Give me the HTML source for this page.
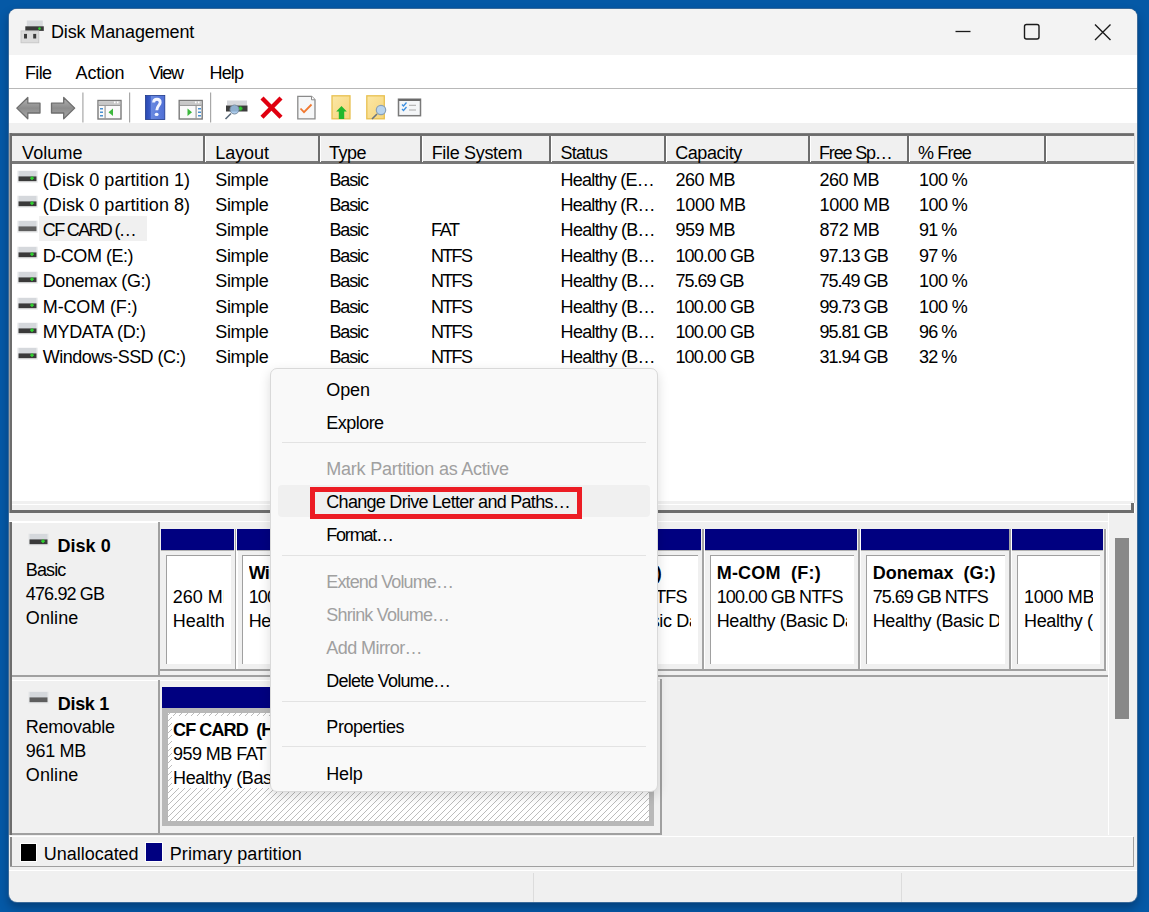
<!DOCTYPE html>
<html><head><meta charset="utf-8"><style>
html,body{margin:0;padding:0;}
body{width:1149px;height:912px;overflow:hidden;position:relative;background:#0559a6;font-family:"Liberation Sans", sans-serif;color:#000;}
div{position:absolute;}
.t{white-space:pre;line-height:20px;}
</style></head><body>
<div style="left:8px;top:8px;width:1130px;height:895px;border-radius:9px;background:#3a6a9a;box-shadow:0 5px 9px rgba(0,20,50,0.35);"></div><div style="left:9px;top:9px;width:1128px;height:893px;border-radius:8px;background:#f0f0f0;overflow:hidden;"><div style="left:0;top:0;width:1128px;height:46px;background:#f3f3f3;"></div></div><div style="left:9px;top:55px;width:1128px;height:33px;background:#fff;"></div><div style="left:9px;top:88px;width:1128px;height:1.3px;background:#b8b8b8;"></div><div style="left:9px;top:89px;width:1128px;height:34px;background:#fff;"></div><div class="t" style="left:51px;top:22.36px;font-size:18px;color:#000;letter-spacing:-0.126px;">Disk Management</div><div class="t" style="left:25px;top:63.36px;font-size:18px;letter-spacing:-0.664px;">File</div><div class="t" style="left:75.6px;top:63.36px;font-size:18px;letter-spacing:-0.203px;">Action</div><div class="t" style="left:149px;top:63.36px;font-size:18px;letter-spacing:-1.230px;">View</div><div class="t" style="left:209.6px;top:63.36px;font-size:18px;letter-spacing:-0.870px;">Help</div><svg style="position:absolute;left:950px;top:20px" width="170" height="24" viewBox="0 0 170 24"><path d="M5.5 11.5h15" stroke="#1a1a1a" stroke-width="1.3"/><rect x="74.5" y="4.5" width="14.5" height="14.5" rx="2" fill="none" stroke="#1a1a1a" stroke-width="1.4"/><path d="M145 4.5l15.5 15.5M160.5 4.5L145 20" stroke="#1a1a1a" stroke-width="1.4"/></svg><svg style="position:absolute;left:0;top:0" width="440" height="126" viewBox="0 0 440 126"><defs><linearGradient id="ag" x1="0" y1="0" x2="0" y2="1"><stop offset="0" stop-color="#b4b4b4"/><stop offset="0.5" stop-color="#8c8c8c"/><stop offset="1" stop-color="#a8a8a8"/></linearGradient><linearGradient id="yf" x1="0" y1="0" x2="1" y2="1"><stop offset="0" stop-color="#fbe7a6"/><stop offset="1" stop-color="#f6d57a"/></linearGradient><linearGradient id="hb" x1="0" y1="0" x2="1" y2="0"><stop offset="0" stop-color="#2a48b0"/><stop offset="0.25" stop-color="#3a5cc8"/><stop offset="0.3" stop-color="#6a8ae0"/><stop offset="1" stop-color="#4f6fd6"/></linearGradient></defs><path d="M16.8 108.1L27.8 97.5V103.2H40V113H27.8V118.8Z" fill="url(#ag)" stroke="#6e6e6e" stroke-width="1.3" stroke-linejoin="round"/><path d="M74.7 108.1L63.7 97.5V103.2H51.5V113H63.7V118.8Z" fill="url(#ag)" stroke="#6e6e6e" stroke-width="1.3" stroke-linejoin="round"/><rect x="82.3" y="92.5" width="1.2" height="30" fill="#a8a8a8"/><rect x="129" y="92.5" width="1.2" height="30" fill="#a8a8a8"/><rect x="210" y="92.5" width="1.2" height="30" fill="#a8a8a8"/><rect x="98" y="100.5" width="23" height="18.5" fill="#fafafa" stroke="#7a7a7a" stroke-width="1.4"/><rect x="98.7" y="101.2" width="21.6" height="3" fill="#c8c8c8"/><rect x="98.7" y="104.5" width="21.6" height="1.5" fill="#9a9a9a"/><rect x="114" y="101.5" width="1.5" height="1.8" fill="#fff"/><rect x="117" y="101.5" width="1.5" height="1.8" fill="#fff"/><rect x="104.5" y="106" width="1.2" height="13" fill="#9a9a9a"/><rect x="100" y="108" width="3" height="1.5" fill="#4a90d0"/><rect x="100" y="111.5" width="3" height="1.5" fill="#4a90d0"/><rect x="100" y="115" width="3" height="1.5" fill="#4a90d0"/><path d="M113 108.5L108.5 112.2L113 116Z" fill="#3cb83c"/><rect x="145.5" y="95.5" width="19.3" height="24" fill="url(#hb)"/><rect x="145.5" y="95.5" width="19.3" height="24" fill="none" stroke="#1e3a8a" stroke-width="0.8"/><path d="M153.6 102.6C153.6 100.2 155.2 99.3 157 99.3C159 99.3 160.2 100.6 160.2 102.4C160.2 105.2 156.8 105.8 156.8 110.3" fill="none" stroke="#f4f6ff" stroke-width="2.9"/><ellipse cx="156.6" cy="114.4" rx="2" ry="1.6" fill="#f4f6ff"/><rect x="179.2" y="100.5" width="23" height="18.5" fill="#fafafa" stroke="#7a7a7a" stroke-width="1.4"/><rect x="179.9" y="101.2" width="21.6" height="3" fill="#c8c8c8"/><rect x="179.9" y="104.5" width="21.6" height="1.5" fill="#9a9a9a"/><rect x="195" y="101.5" width="1.5" height="1.8" fill="#fff"/><rect x="198" y="101.5" width="1.5" height="1.8" fill="#fff"/><rect x="195.5" y="106" width="1.2" height="13" fill="#9a9a9a"/><rect x="198" y="108" width="3" height="1.5" fill="#4a90d0"/><rect x="198" y="111.5" width="3" height="1.5" fill="#4a90d0"/><rect x="198" y="115" width="3" height="1.5" fill="#4a90d0"/><path d="M187.5 108.5L192 112.2L187.5 116Z" fill="#3cb83c"/><rect x="227" y="100.5" width="20" height="5" fill="#d6d8dc"/><rect x="226" y="105.5" width="21.5" height="6" fill="#3c3c3c"/><rect x="238.5" y="107.5" width="4" height="2" fill="#2ccc2c"/><rect x="239.5" y="106.5" width="2" height="4" fill="#2ccc2c"/><line x1="225.5" y1="119" x2="231" y2="113.5" stroke="#5a6a7a" stroke-width="1.6"/><circle cx="234.5" cy="109.5" r="4.5" fill="#9cc2e8" fill-opacity="0.85" stroke="#7a8ea2" stroke-width="1"/><path d="M263.5 99.5L279.5 115.8M279.5 99.5L263.5 115.8" stroke="#e00010" stroke-width="4.3" stroke-linecap="square"/><path d="M297.8 96.3H311.5L315 99.8V118.8H297.8Z" fill="#f6f7f8" stroke="#8a8a8a" stroke-width="1.3"/><path d="M311.5 96.3V99.8H315" fill="#fff" stroke="#8a8a8a" stroke-width="1"/><path d="M300.5 108.5L304 112.2L311.5 104.5" fill="none" stroke="#f07830" stroke-width="1.8"/><rect x="332" y="95.8" width="18" height="23" fill="url(#yf)" stroke="#e8c050" stroke-width="1.3"/><path d="M341.5 106L346.8 111.6H344.2V119H338.8V111.6H336.2Z" fill="#22b82c"/><rect x="366.8" y="95.8" width="17.5" height="23" fill="url(#yf)" stroke="#e8c050" stroke-width="1.3"/><line x1="372" y1="119" x2="377" y2="114" stroke="#6a7480" stroke-width="1.6"/><circle cx="381" cy="110" r="4.7" fill="#b8d4ee" stroke="#8aa0b6" stroke-width="1.2"/><rect x="398.5" y="99.2" width="22" height="16.5" fill="#f4f6f8" stroke="#7a7a7a" stroke-width="1.5"/><rect x="398.5" y="99" width="22" height="2" fill="#6a6a6a"/><path d="M402 104.5L403.5 106L406.5 102.5M402 109L403.5 110.5L406.5 107" fill="none" stroke="#3a8ee0" stroke-width="1.3"/><rect x="409" y="104.8" width="7" height="1" fill="#a8a8a8"/><rect x="409" y="109.5" width="7" height="1" fill="#a8a8a8"/><rect x="26.8" y="20.5" width="16" height="6" fill="#d8dadd"/><rect x="25.3" y="26.3" width="18.5" height="4.6" fill="#3a3a3a"/><circle cx="39.5" cy="28.6" r="1.3" fill="#30d030"/><rect x="21" y="30.9" width="17.8" height="11.9" fill="#dcdcdc" stroke="#c4c4c4" stroke-width="0.8"/><rect x="24" y="33.9" width="3" height="4.6" fill="#3c3c3c"/><rect x="33.2" y="33.9" width="3" height="4.6" fill="#3c3c3c"/></svg><div style="left:9px;top:133px;width:1126px;height:380px;background:#fff;"></div><div style="left:9px;top:133px;width:1126px;height:3px;background:linear-gradient(#8a8a8a, #6a6a6a 45%, #737373);"></div><div style="left:9px;top:133px;width:1px;height:380px;background:#a0a0a0;"></div><div style="left:10px;top:133px;width:2px;height:380px;background:#6d6d6d;"></div><div style="left:12px;top:501px;width:1121px;height:3px;background:#f0f0f0;"></div><div style="left:12px;top:504px;width:1121px;height:1px;background:#fff;"></div><div style="left:12px;top:505px;width:1121px;height:5px;background:#f0f0f0;"></div><div style="left:12px;top:510px;width:1122px;height:2.6px;background:#6d6d6d;"></div><div style="left:1131px;top:503px;width:3px;height:8px;background:#6d6d6d;"></div><div style="left:1134px;top:133px;width:1px;height:370px;background:#d8d8d8;"></div><div style="left:12px;top:136px;width:1122px;height:25px;background:#f0f0f0;"></div><div style="left:12px;top:161px;width:1122px;height:3px;background:#777;"></div><div style="left:203px;top:136px;width:2px;height:27px;background:#6d6d6d;"></div><div style="left:205px;top:136px;width:1px;height:26px;background:#fff;"></div><div style="left:317.6px;top:136px;width:2px;height:27px;background:#6d6d6d;"></div><div style="left:319.6px;top:136px;width:1px;height:26px;background:#fff;"></div><div style="left:419.6px;top:136px;width:2px;height:27px;background:#6d6d6d;"></div><div style="left:421.6px;top:136px;width:1px;height:26px;background:#fff;"></div><div style="left:549px;top:136px;width:2px;height:27px;background:#6d6d6d;"></div><div style="left:551px;top:136px;width:1px;height:26px;background:#fff;"></div><div style="left:664px;top:136px;width:2px;height:27px;background:#6d6d6d;"></div><div style="left:666px;top:136px;width:1px;height:26px;background:#fff;"></div><div style="left:808px;top:136px;width:2px;height:27px;background:#6d6d6d;"></div><div style="left:810px;top:136px;width:1px;height:26px;background:#fff;"></div><div style="left:907px;top:136px;width:2px;height:27px;background:#6d6d6d;"></div><div style="left:909px;top:136px;width:1px;height:26px;background:#fff;"></div><div style="left:1044px;top:136px;width:2px;height:27px;background:#6d6d6d;"></div><div style="left:1046px;top:136px;width:1px;height:26px;background:#fff;"></div><div class="t" style="left:22px;top:142.86px;font-size:18px;letter-spacing:0.115px;">Volume</div><div class="t" style="left:215.2px;top:142.86px;font-size:18px;letter-spacing:-0.029px;">Layout</div><div class="t" style="left:329px;top:142.86px;font-size:18px;letter-spacing:-0.471px;">Type</div><div class="t" style="left:431.7px;top:142.86px;font-size:18px;letter-spacing:-0.322px;">File System</div><div class="t" style="left:560.4px;top:142.86px;font-size:18px;letter-spacing:-0.706px;">Status</div><div class="t" style="left:675.2px;top:142.86px;font-size:18px;letter-spacing:-0.419px;">Capacity</div><div class="t" style="left:819px;top:142.86px;font-size:18px;letter-spacing:-1.175px;">Free Sp…</div><div class="t" style="left:918px;top:142.86px;font-size:18px;letter-spacing:-0.841px;">% Free</div><svg style="position:absolute;left:16.5px;top:169.6px" width="21" height="13" viewBox="0 0 21 13"><rect x="0" y="0.5" width="21" height="12.5" rx="1" fill="#e4e6e8" fill-opacity="0.6"/><rect x="1.5" y="1" width="18" height="5.6" fill="#d5d8dc"/><rect x="1.5" y="6.4" width="18" height="4.8" fill="#3a3a3a"/><rect x="13.2" y="7.4" width="3.6" height="1.6" fill="#2ed12e"/><rect x="14.2" y="6.4" width="1.6" height="3.6" fill="#2ed12e"/></svg><div class="t" style="left:42.8px;top:169.56px;font-size:18px;letter-spacing:0.066px;">(Disk 0 partition 1)</div><div class="t" style="left:215.2px;top:169.56px;font-size:18px;letter-spacing:-0.302px;">Simple</div><div class="t" style="left:329.4px;top:169.56px;font-size:18px;letter-spacing:-1.129px;">Basic</div><div class="t" style="left:560.6px;top:169.56px;font-size:18px;letter-spacing:-0.793px;">Healthy (E…</div><div class="t" style="left:675.4px;top:169.56px;font-size:18px;letter-spacing:-0.405px;">260 MB</div><div class="t" style="left:819.4px;top:169.56px;font-size:18px;letter-spacing:-0.405px;">260 MB</div><div class="t" style="left:919.1px;top:169.56px;font-size:18px;letter-spacing:-0.608px;">100 %</div><svg style="position:absolute;left:16.5px;top:195.01px" width="21" height="13" viewBox="0 0 21 13"><rect x="0" y="0.5" width="21" height="12.5" rx="1" fill="#e4e6e8" fill-opacity="0.6"/><rect x="1.5" y="1" width="18" height="5.6" fill="#d5d8dc"/><rect x="1.5" y="6.4" width="18" height="4.8" fill="#3a3a3a"/><rect x="13.2" y="7.4" width="3.6" height="1.6" fill="#2ed12e"/><rect x="14.2" y="6.4" width="1.6" height="3.6" fill="#2ed12e"/></svg><div class="t" style="left:42.8px;top:194.97px;font-size:18px;letter-spacing:0.066px;">(Disk 0 partition 8)</div><div class="t" style="left:215.2px;top:194.97px;font-size:18px;letter-spacing:-0.302px;">Simple</div><div class="t" style="left:329.4px;top:194.97px;font-size:18px;letter-spacing:-1.129px;">Basic</div><div class="t" style="left:560.6px;top:194.97px;font-size:18px;letter-spacing:-0.803px;">Healthy (R…</div><div class="t" style="left:675.4px;top:194.97px;font-size:18px;letter-spacing:-0.223px;">1000 MB</div><div class="t" style="left:819.4px;top:194.97px;font-size:18px;letter-spacing:-0.223px;">1000 MB</div><div class="t" style="left:919.1px;top:194.97px;font-size:18px;letter-spacing:-0.608px;">100 %</div><div style="left:38.7px;top:215.7px;width:108px;height:25px;background:#f0f0f0;"></div><svg style="position:absolute;left:16.5px;top:220.42px" width="21" height="13" viewBox="0 0 21 13"><rect x="0" y="0.5" width="21" height="12.5" rx="1" fill="#e4e6e8" fill-opacity="0.6"/><rect x="1.5" y="1" width="18" height="5.6" fill="#d5d8dc"/><rect x="1.5" y="6.4" width="18" height="4.8" fill="#5e5e5e"/></svg><div class="t" style="left:42.8px;top:220.38px;font-size:18px;letter-spacing:-1.666px;">CF CARD (…</div><div class="t" style="left:215.2px;top:220.38px;font-size:18px;letter-spacing:-0.302px;">Simple</div><div class="t" style="left:329.4px;top:220.38px;font-size:18px;letter-spacing:-1.129px;">Basic</div><div class="t" style="left:430.9px;top:220.38px;font-size:18px;letter-spacing:-1.236px;">FAT</div><div class="t" style="left:560.6px;top:220.38px;font-size:18px;letter-spacing:-0.703px;">Healthy (B…</div><div class="t" style="left:675.4px;top:220.38px;font-size:18px;letter-spacing:-0.405px;">959 MB</div><div class="t" style="left:819.4px;top:220.38px;font-size:18px;letter-spacing:-0.345px;">872 MB</div><div class="t" style="left:919.1px;top:220.38px;font-size:18px;letter-spacing:-0.941px;">91 %</div><svg style="position:absolute;left:16.5px;top:245.83px" width="21" height="13" viewBox="0 0 21 13"><rect x="0" y="0.5" width="21" height="12.5" rx="1" fill="#e4e6e8" fill-opacity="0.6"/><rect x="1.5" y="1" width="18" height="5.6" fill="#d5d8dc"/><rect x="1.5" y="6.4" width="18" height="4.8" fill="#3a3a3a"/><rect x="13.2" y="7.4" width="3.6" height="1.6" fill="#2ed12e"/><rect x="14.2" y="6.4" width="1.6" height="3.6" fill="#2ed12e"/></svg><div class="t" style="left:42.8px;top:245.79px;font-size:18px;letter-spacing:-0.477px;">D-COM (E:)</div><div class="t" style="left:215.2px;top:245.79px;font-size:18px;letter-spacing:-0.302px;">Simple</div><div class="t" style="left:329.4px;top:245.79px;font-size:18px;letter-spacing:-1.129px;">Basic</div><div class="t" style="left:430.9px;top:245.79px;font-size:18px;letter-spacing:-1.630px;">NTFS</div><div class="t" style="left:560.6px;top:245.79px;font-size:18px;letter-spacing:-0.703px;">Healthy (B…</div><div class="t" style="left:675.4px;top:245.79px;font-size:18px;letter-spacing:-0.795px;">100.00 GB</div><div class="t" style="left:819.4px;top:245.79px;font-size:18px;letter-spacing:-0.964px;">97.13 GB</div><div class="t" style="left:919.1px;top:245.79px;font-size:18px;letter-spacing:-0.941px;">97 %</div><svg style="position:absolute;left:16.5px;top:271.23999999999995px" width="21" height="13" viewBox="0 0 21 13"><rect x="0" y="0.5" width="21" height="12.5" rx="1" fill="#e4e6e8" fill-opacity="0.6"/><rect x="1.5" y="1" width="18" height="5.6" fill="#d5d8dc"/><rect x="1.5" y="6.4" width="18" height="4.8" fill="#3a3a3a"/><rect x="13.2" y="7.4" width="3.6" height="1.6" fill="#2ed12e"/><rect x="14.2" y="6.4" width="1.6" height="3.6" fill="#2ed12e"/></svg><div class="t" style="left:42.8px;top:271.20px;font-size:18px;letter-spacing:-0.439px;">Donemax (G:)</div><div class="t" style="left:215.2px;top:271.20px;font-size:18px;letter-spacing:-0.302px;">Simple</div><div class="t" style="left:329.4px;top:271.20px;font-size:18px;letter-spacing:-1.129px;">Basic</div><div class="t" style="left:430.9px;top:271.20px;font-size:18px;letter-spacing:-1.630px;">NTFS</div><div class="t" style="left:560.6px;top:271.20px;font-size:18px;letter-spacing:-0.703px;">Healthy (B…</div><div class="t" style="left:675.4px;top:271.20px;font-size:18px;letter-spacing:-1.007px;">75.69 GB</div><div class="t" style="left:819.4px;top:271.20px;font-size:18px;letter-spacing:-1.007px;">75.49 GB</div><div class="t" style="left:919.1px;top:271.20px;font-size:18px;letter-spacing:-0.608px;">100 %</div><svg style="position:absolute;left:16.5px;top:296.65px" width="21" height="13" viewBox="0 0 21 13"><rect x="0" y="0.5" width="21" height="12.5" rx="1" fill="#e4e6e8" fill-opacity="0.6"/><rect x="1.5" y="1" width="18" height="5.6" fill="#d5d8dc"/><rect x="1.5" y="6.4" width="18" height="4.8" fill="#3a3a3a"/><rect x="13.2" y="7.4" width="3.6" height="1.6" fill="#2ed12e"/><rect x="14.2" y="6.4" width="1.6" height="3.6" fill="#2ed12e"/></svg><div class="t" style="left:42.8px;top:296.61px;font-size:18px;letter-spacing:-0.142px;">M-COM (F:)</div><div class="t" style="left:215.2px;top:296.61px;font-size:18px;letter-spacing:-0.302px;">Simple</div><div class="t" style="left:329.4px;top:296.61px;font-size:18px;letter-spacing:-1.129px;">Basic</div><div class="t" style="left:430.9px;top:296.61px;font-size:18px;letter-spacing:-1.630px;">NTFS</div><div class="t" style="left:560.6px;top:296.61px;font-size:18px;letter-spacing:-0.703px;">Healthy (B…</div><div class="t" style="left:675.4px;top:296.61px;font-size:18px;letter-spacing:-0.795px;">100.00 GB</div><div class="t" style="left:819.4px;top:296.61px;font-size:18px;letter-spacing:-1.007px;">99.73 GB</div><div class="t" style="left:919.1px;top:296.61px;font-size:18px;letter-spacing:-0.608px;">100 %</div><svg style="position:absolute;left:16.5px;top:322.05999999999995px" width="21" height="13" viewBox="0 0 21 13"><rect x="0" y="0.5" width="21" height="12.5" rx="1" fill="#e4e6e8" fill-opacity="0.6"/><rect x="1.5" y="1" width="18" height="5.6" fill="#d5d8dc"/><rect x="1.5" y="6.4" width="18" height="4.8" fill="#3a3a3a"/><rect x="13.2" y="7.4" width="3.6" height="1.6" fill="#2ed12e"/><rect x="14.2" y="6.4" width="1.6" height="3.6" fill="#2ed12e"/></svg><div class="t" style="left:42.8px;top:322.02px;font-size:18px;letter-spacing:-0.313px;">MYDATA (D:)</div><div class="t" style="left:215.2px;top:322.02px;font-size:18px;letter-spacing:-0.302px;">Simple</div><div class="t" style="left:329.4px;top:322.02px;font-size:18px;letter-spacing:-1.129px;">Basic</div><div class="t" style="left:430.9px;top:322.02px;font-size:18px;letter-spacing:-1.630px;">NTFS</div><div class="t" style="left:560.6px;top:322.02px;font-size:18px;letter-spacing:-0.703px;">Healthy (B…</div><div class="t" style="left:675.4px;top:322.02px;font-size:18px;letter-spacing:-0.795px;">100.00 GB</div><div class="t" style="left:819.4px;top:322.02px;font-size:18px;letter-spacing:-1.007px;">95.81 GB</div><div class="t" style="left:919.1px;top:322.02px;font-size:18px;letter-spacing:-0.941px;">96 %</div><svg style="position:absolute;left:16.5px;top:347.46999999999997px" width="21" height="13" viewBox="0 0 21 13"><rect x="0" y="0.5" width="21" height="12.5" rx="1" fill="#e4e6e8" fill-opacity="0.6"/><rect x="1.5" y="1" width="18" height="5.6" fill="#d5d8dc"/><rect x="1.5" y="6.4" width="18" height="4.8" fill="#3a3a3a"/><rect x="13.2" y="7.4" width="3.6" height="1.6" fill="#2ed12e"/><rect x="14.2" y="6.4" width="1.6" height="3.6" fill="#2ed12e"/></svg><div class="t" style="left:42.8px;top:347.43px;font-size:18px;letter-spacing:-0.521px;">Windows-SSD (C:)</div><div class="t" style="left:215.2px;top:347.43px;font-size:18px;letter-spacing:-0.302px;">Simple</div><div class="t" style="left:329.4px;top:347.43px;font-size:18px;letter-spacing:-1.129px;">Basic</div><div class="t" style="left:430.9px;top:347.43px;font-size:18px;letter-spacing:-1.630px;">NTFS</div><div class="t" style="left:560.6px;top:347.43px;font-size:18px;letter-spacing:-0.703px;">Healthy (B…</div><div class="t" style="left:675.4px;top:347.43px;font-size:18px;letter-spacing:-0.795px;">100.00 GB</div><div class="t" style="left:819.4px;top:347.43px;font-size:18px;letter-spacing:-1.007px;">31.94 GB</div><div class="t" style="left:919.1px;top:347.43px;font-size:18px;letter-spacing:-0.941px;">32 %</div><div style="left:9px;top:513px;width:1128px;height:8px;background:#f0f0f0;"></div><div style="left:9px;top:521px;width:1100px;height:1px;background:#fff;"></div><div style="left:1108px;top:513px;width:1px;height:324px;background:#fff;"></div><div style="left:9px;top:522px;width:1px;height:313px;background:#a0a0a0;"></div><div style="left:10px;top:522px;width:2px;height:313px;background:#6d6d6d;"></div><div style="left:1114.5px;top:538px;width:14.5px;height:181px;background:#888;"></div><div style="left:12px;top:522px;width:146px;height:1px;background:#fff;"></div><div style="left:158px;top:522px;width:2px;height:153px;background:#a0a0a0;"></div><div style="left:12px;top:675px;width:1096px;height:1.5px;background:#a0a0a0;"></div><div style="left:12px;top:680px;width:146px;height:1px;background:#fff;"></div><div style="left:158px;top:680px;width:2px;height:153px;background:#a0a0a0;"></div><div style="left:12px;top:833px;width:649.5px;height:1.5px;background:#a0a0a0;"></div><div style="left:160px;top:680px;width:500px;height:1px;background:#fff;"></div><div style="left:660px;top:679px;width:1.5px;height:154px;background:#a0a0a0;"></div><svg style="position:absolute;left:28.0px;top:532.7px" width="21" height="13" viewBox="0 0 21 13"><rect x="0" y="0.5" width="21" height="12.5" rx="1" fill="#e4e6e8" fill-opacity="0.6"/><rect x="1.5" y="1" width="18" height="5.6" fill="#d5d8dc"/><rect x="1.5" y="6.4" width="18" height="4.8" fill="#3a3a3a"/><rect x="13.2" y="7.4" width="3.6" height="1.6" fill="#2ed12e"/><rect x="14.2" y="6.4" width="1.6" height="3.6" fill="#2ed12e"/></svg><div class="t" style="left:57.4px;top:535.66px;font-size:18px;font-weight:bold;letter-spacing:0.056px;">Disk 0</div><div class="t" style="left:25.8px;top:560.16px;font-size:18px;letter-spacing:-0.879px;">Basic</div><div class="t" style="left:25.8px;top:583.96px;font-size:18px;letter-spacing:-0.857px;">476.92 GB</div><div class="t" style="left:25.8px;top:607.96px;font-size:18px;letter-spacing:0.096px;">Online</div><svg style="position:absolute;left:27.5px;top:690.5px" width="21" height="13" viewBox="0 0 21 13"><rect x="0" y="0.5" width="21" height="12.5" rx="1" fill="#e4e6e8" fill-opacity="0.6"/><rect x="1.5" y="1" width="18" height="5.6" fill="#d5d8dc"/><rect x="1.5" y="6.4" width="18" height="4.8" fill="#5e5e5e"/></svg><div class="t" style="left:57.8px;top:693.66px;font-size:18px;font-weight:bold;letter-spacing:-0.324px;">Disk 1</div><div class="t" style="left:25.8px;top:717.46px;font-size:18px;letter-spacing:-0.229px;">Removable</div><div class="t" style="left:25.8px;top:741.36px;font-size:18px;letter-spacing:-0.325px;">961 MB</div><div class="t" style="left:25.8px;top:765.26px;font-size:18px;letter-spacing:0.096px;">Online</div><div style="left:160px;top:529px;width:946px;height:141px;background:#f0f0f0;"></div><div style="left:161px;top:529px;width:72.80000000000001px;height:21px;background:#000080;"></div><div style="left:161px;top:550px;width:72.80000000000001px;height:1px;background:#b4b4b4;"></div><div style="left:234.60000000000002px;top:529px;width:1.8px;height:141px;background:#a4a4a4;"></div><div style="left:236.4px;top:529px;width:1.4px;height:141px;background:#fff;"></div><div style="left:165.7px;top:555px;width:65.10000000000001px;height:109px;background:#fff;border-left:1.5px solid #a0a0a0;border-top:1.5px solid #a0a0a0;box-sizing:border-box;"></div><div style="left:172.7px;top:556px;width:51.30000000000001px;height:100px;overflow:hidden;"><div class="t" style="left:0px;top:30.56px;font-size:18px;letter-spacing:0.000px;">260 MB</div><div class="t" style="left:0px;top:54.86px;font-size:18px;letter-spacing:0.000px;">Healthy (EFI System Partition)</div></div><div style="left:237px;top:529px;width:152px;height:21px;background:#000080;"></div><div style="left:237px;top:550px;width:152px;height:1px;background:#b4b4b4;"></div><div style="left:389.8px;top:529px;width:1.8px;height:141px;background:#a4a4a4;"></div><div style="left:391.6px;top:529px;width:1.4px;height:141px;background:#fff;"></div><div style="left:241.7px;top:555px;width:144.3px;height:109px;background:#fff;border-left:1.5px solid #a0a0a0;border-top:1.5px solid #a0a0a0;box-sizing:border-box;"></div><div style="left:248.7px;top:556px;width:130.5px;height:100px;overflow:hidden;"><div class="t" style="left:0px;top:6.76px;font-size:18px;font-weight:bold;letter-spacing:-0.801px;">Windows-SSD  (C:)</div><div class="t" style="left:0px;top:30.56px;font-size:18px;letter-spacing:-0.866px;">100.00 GB NTFS</div><div class="t" style="left:0px;top:54.86px;font-size:18px;letter-spacing:-0.371px;">Healthy (Boot, Page File, Crash Dump, Basic Data Partition)</div></div><div style="left:393px;top:529px;width:152px;height:21px;background:#000080;"></div><div style="left:393px;top:550px;width:152px;height:1px;background:#b4b4b4;"></div><div style="left:545.8px;top:529px;width:1.8px;height:141px;background:#a4a4a4;"></div><div style="left:547.6px;top:529px;width:1.4px;height:141px;background:#fff;"></div><div style="left:397.7px;top:555px;width:144.3px;height:109px;background:#fff;border-left:1.5px solid #a0a0a0;border-top:1.5px solid #a0a0a0;box-sizing:border-box;"></div><div style="left:404.7px;top:556px;width:130.5px;height:100px;overflow:hidden;"><div class="t" style="left:0px;top:6.76px;font-size:18px;font-weight:bold;letter-spacing:-0.210px;">MYDATA  (D:)</div><div class="t" style="left:0px;top:30.56px;font-size:18px;letter-spacing:-0.866px;">100.00 GB NTFS</div><div class="t" style="left:0px;top:54.86px;font-size:18px;letter-spacing:-0.363px;">Healthy (Basic Data Partition)</div></div><div style="left:549px;top:529px;width:152px;height:21px;background:#000080;"></div><div style="left:549px;top:550px;width:152px;height:1px;background:#b4b4b4;"></div><div style="left:701.8px;top:529px;width:1.8px;height:141px;background:#a4a4a4;"></div><div style="left:703.6px;top:529px;width:1.4px;height:141px;background:#fff;"></div><div style="left:553.7px;top:555px;width:144.3px;height:109px;background:#fff;border-left:1.5px solid #a0a0a0;border-top:1.5px solid #a0a0a0;box-sizing:border-box;"></div><div style="left:560.7px;top:556px;width:130.5px;height:100px;overflow:hidden;"><div class="t" style="left:0px;top:6.76px;font-size:18px;font-weight:bold;letter-spacing:0.002px;">D-COM  (E:)</div><div class="t" style="left:0px;top:30.56px;font-size:18px;letter-spacing:-0.866px;">100.00 GB NTFS</div><div class="t" style="left:0px;top:54.86px;font-size:18px;letter-spacing:-0.363px;">Healthy (Basic Data Partition)</div></div><div style="left:705px;top:529px;width:152px;height:21px;background:#000080;"></div><div style="left:705px;top:550px;width:152px;height:1px;background:#b4b4b4;"></div><div style="left:857.8px;top:529px;width:1.8px;height:141px;background:#a4a4a4;"></div><div style="left:859.6px;top:529px;width:1.4px;height:141px;background:#fff;"></div><div style="left:709.7px;top:555px;width:144.3px;height:109px;background:#fff;border-left:1.5px solid #a0a0a0;border-top:1.5px solid #a0a0a0;box-sizing:border-box;"></div><div style="left:716.7px;top:556px;width:130.5px;height:100px;overflow:hidden;"><div class="t" style="left:0px;top:6.76px;font-size:18px;font-weight:bold;letter-spacing:0.203px;">M-COM  (F:)</div><div class="t" style="left:0px;top:30.56px;font-size:18px;letter-spacing:-0.866px;">100.00 GB NTFS</div><div class="t" style="left:0px;top:54.86px;font-size:18px;letter-spacing:-0.363px;">Healthy (Basic Data Partition)</div></div><div style="left:861px;top:529px;width:147.5px;height:21px;background:#000080;"></div><div style="left:861px;top:550px;width:147.5px;height:1px;background:#b4b4b4;"></div><div style="left:1009.3px;top:529px;width:1.8px;height:141px;background:#a4a4a4;"></div><div style="left:1011.1px;top:529px;width:1.4px;height:141px;background:#fff;"></div><div style="left:865.7px;top:555px;width:139.8px;height:109px;background:#fff;border-left:1.5px solid #a0a0a0;border-top:1.5px solid #a0a0a0;box-sizing:border-box;"></div><div style="left:872.7px;top:556px;width:126.0px;height:100px;overflow:hidden;"><div class="t" style="left:0px;top:6.76px;font-size:18px;font-weight:bold;letter-spacing:-0.018px;">Donemax  (G:)</div><div class="t" style="left:0px;top:30.56px;font-size:18px;letter-spacing:-1.003px;">75.69 GB NTFS</div><div class="t" style="left:0px;top:54.86px;font-size:18px;letter-spacing:-0.363px;">Healthy (Basic Data Partition)</div></div><div style="left:1012.3px;top:529px;width:90.90000000000009px;height:21px;background:#000080;"></div><div style="left:1012.3px;top:550px;width:90.90000000000009px;height:1px;background:#b4b4b4;"></div><div style="left:1104.0px;top:529px;width:1.8px;height:141px;background:#a4a4a4;"></div><div style="left:1105.8px;top:529px;width:1.4px;height:141px;background:#fff;"></div><div style="left:1017.0px;top:555px;width:83.20000000000009px;height:109px;background:#fff;border-left:1.5px solid #a0a0a0;border-top:1.5px solid #a0a0a0;box-sizing:border-box;"></div><div style="left:1024.0px;top:556px;width:69.40000000000009px;height:100px;overflow:hidden;"><div class="t" style="left:0px;top:30.56px;font-size:18px;letter-spacing:-0.256px;">1000 MB</div><div class="t" style="left:0px;top:54.86px;font-size:18px;letter-spacing:-0.372px;">Healthy (Recovery Partition)</div></div><div style="left:160px;top:669px;width:946px;height:1.5px;background:#a0a0a0;"></div><div style="left:162px;top:687px;width:492px;height:21px;background:#000080;"></div><div style="left:162px;top:708px;width:492px;height:118px;background:#b8b8b8;"></div><div style="left:167.5px;top:713px;width:481px;height:108px;background:#fff;background-image:repeating-linear-gradient(-45deg, #fff 0px, #fff 3.1px, #bcbcbc 3.2px, #bcbcbc 4.24px);"></div><div style="left:172px;top:716px;width:476px;height:72px;background:#fff;overflow:hidden;"><div class="t" style="left:1px;top:4.36px;font-size:18px;font-weight:bold;letter-spacing:-0.874px;">CF CARD  (H:)</div><div class="t" style="left:1px;top:28.36px;font-size:18px;letter-spacing:-0.548px;">959 MB FAT</div><div class="t" style="left:1px;top:52.36px;font-size:18px;letter-spacing:-0.363px;">Healthy (Basic Data Partition)</div></div><div style="left:9px;top:835px;width:1128px;height:2px;background:#f0f0f0;"></div><div style="left:10px;top:836px;width:1123px;height:1px;background:#fff;"></div><div style="left:10px;top:837px;width:2px;height:30px;background:#8a8a8a;"></div><div style="left:10px;top:865.5px;width:1124px;height:1.5px;background:#a0a0a0;"></div><div style="left:1132.5px;top:837px;width:1.5px;height:30px;background:#a0a0a0;"></div><div style="left:19.5px;top:842.5px;width:17px;height:19px;background:#fff;"></div><div style="left:20.5px;top:843.5px;width:15px;height:17px;background:#000;"></div><div style="left:145px;top:842px;width:18px;height:19.5px;background:#fff;"></div><div style="left:146px;top:843px;width:16px;height:17.5px;background:#000080;"></div><div class="t" style="left:43.8px;top:843.76px;font-size:18px;letter-spacing:-0.025px;">Unallocated</div><div class="t" style="left:169.8px;top:843.76px;font-size:18px;letter-spacing:0.061px;">Primary partition</div><div style="left:9px;top:870px;width:1128px;height:1px;background:#fff;"></div><div style="left:533px;top:872.5px;width:1px;height:29px;background:#dcdcdc;"></div><div style="left:901px;top:872.5px;width:1px;height:29px;background:#dcdcdc;"></div><div style="left:270px;top:368px;width:388px;height:424px;background:#f9f9f9;border:1px solid #d9d9d9;box-sizing:border-box;border-radius:7px;box-shadow:0 4px 12px rgba(0,0,0,0.14);"></div><div style="left:278px;top:484.5px;width:372px;height:32px;background:#f0f0f0;border-radius:4px;"></div><div style="left:310px;top:487px;width:272px;height:31.5px;border:5px solid #ec1c24;box-sizing:border-box;"></div><div class="t" style="left:326.3px;top:380.06px;font-size:18px;color:#000;letter-spacing:-0.141px;">Open</div><div class="t" style="left:326.3px;top:412.86px;font-size:18px;color:#000;letter-spacing:-0.537px;">Explore</div><div class="t" style="left:326.3px;top:458.56px;font-size:18px;color:#a0a0a0;letter-spacing:-0.228px;">Mark Partition as Active</div><div class="t" style="left:326.3px;top:491.96px;font-size:18px;color:#000;letter-spacing:-0.715px;">Change Drive Letter and Paths…</div><div class="t" style="left:326.3px;top:524.76px;font-size:18px;color:#000;letter-spacing:-1.218px;">Format…</div><div class="t" style="left:326.3px;top:571.86px;font-size:18px;color:#a0a0a0;letter-spacing:-0.883px;">Extend Volume…</div><div class="t" style="left:326.3px;top:604.66px;font-size:18px;color:#a0a0a0;letter-spacing:-0.789px;">Shrink Volume…</div><div class="t" style="left:326.3px;top:637.86px;font-size:18px;color:#a0a0a0;letter-spacing:-0.571px;">Add Mirror…</div><div class="t" style="left:326.3px;top:671.06px;font-size:18px;color:#000;letter-spacing:-0.790px;">Delete Volume…</div><div class="t" style="left:326.3px;top:717.36px;font-size:18px;color:#000;letter-spacing:-0.426px;">Properties</div><div class="t" style="left:326.3px;top:763.86px;font-size:18px;color:#000;letter-spacing:-0.203px;">Help</div><div style="left:282px;top:442px;width:364px;height:1px;background:#e3e3e3;"></div><div style="left:282px;top:554.5px;width:364px;height:1px;background:#e3e3e3;"></div><div style="left:282px;top:700.5px;width:364px;height:1px;background:#e3e3e3;"></div><div style="left:282px;top:746.3px;width:364px;height:1px;background:#e3e3e3;"></div>
</body></html>
